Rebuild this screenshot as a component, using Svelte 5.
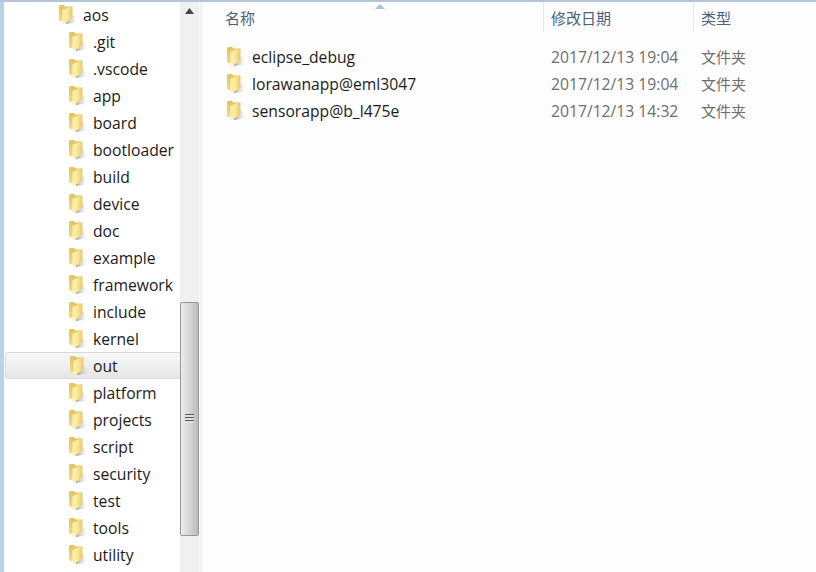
<script>
  const tree = ['.git','.vscode','app','board','bootloader','build','device','doc','example','framework','include','kernel','out','platform','projects','script','security','test','tools','utility'];
  const files = [
    ['eclipse_debug','2017/12/13 19:04'],
    ['lorawanapp@eml3047','2017/12/13 19:04'],
    ['sensorapp@b_l475e','2017/12/13 14:32']
  ];
</script>

{#snippet folder()}
  <svg class="folder" width="19" height="21" viewBox="0 0 19 21">
    <defs>
      <linearGradient id="fb" x1="0" y1="0" x2="0" y2="1"><stop offset="0" stop-color="#e3c25f"/><stop offset="1" stop-color="#f0da82"/></linearGradient>
      <linearGradient id="ff" x1="0" y1="0" x2="1" y2="0"><stop offset="0" stop-color="#fcf2ba"/><stop offset="0.5" stop-color="#fae795"/><stop offset="1" stop-color="#e9c968"/></linearGradient>
      <linearGradient id="fs" x1="0" y1="0" x2="1" y2="0"><stop offset="0" stop-color="#777" stop-opacity=".7"/><stop offset="1" stop-color="#bbb" stop-opacity="0"/></linearGradient>
    </defs>
    <path d="M13 9 L19 14 L19 18.5 L8 20 L8 17 Z" fill="url(#fs)"/>
    <path d="M1 2.5 Q1 1 2.5 1 L6 1 L7.5 2.5 L12 2.5 L12 16 L2.5 17 Q1 17 1 15.5 Z" fill="url(#fb)"/>
    <path d="M4.5 6 L13.5 2 Q14.5 2 14.5 3 L14.5 14.5 L6.5 19.7 Q5 20.3 4.5 18.5 Z" fill="url(#ff)"/>
  </svg>
{/snippet}

<div class="window">
  <aside class="tree">
    <div class="row root">{@render folder()}<span>aos</span></div>
    {#each tree as name}
      <div class="row" class:hot={name === 'out'}>{@render folder()}<span>{name}</span></div>
    {/each}
  </aside>

  <div class="scrollbar">
    <svg class="arrow" width="9" height="6" viewBox="0 0 9 6"><path d="M4.5 0 L9 6 L0 6 Z" fill="#444"/></svg>
    <div class="thumb"><div class="grip"></div></div>
  </div>

  <div class="split"></div>

  <main class="list">
    <div class="sort"><svg width="10" height="5" viewBox="0 0 10 5"><path d="M5 0 L10 5 L0 5 Z" fill="#a9c2de"/></svg></div>
    <header class="head">
      <div class="h c1">名称</div>
      <div class="h c2">修改日期</div>
      <div class="h c3">类型</div>
    </header>
    <div class="rows">
      {#each files as [name, date]}
        <div class="file">
          <div class="c1 fname">{@render folder()}<span>{name}</span></div>
          <div class="c2 meta">{date}</div>
          <div class="c3 meta cjk">文件夹</div>
        </div>
      {/each}
    </div>
  </main>
</div>

<style>
  :global(body) { margin: 0; background: #fff; }
  .window {
    width: 816px; height: 572px; box-sizing: border-box; overflow: hidden;
    display: flex; background: #fff;
    border-top: 2px solid #b4c4da;
    font-family: "Open Sans", "Noto Sans CJK SC", sans-serif;
    font-size: 15.7px; color: #1a1a1a;
  }
  .tree { width: 176px; margin-left: 4px; margin-top: -1px; flex: none; }
  .window::before { content: ""; width: 4px; flex: none; background: #b9d1ea; margin-right: -4px; margin-top: -2px; }
  .row {
    height: 27px; display: flex; align-items: center; padding-left: 64px; box-sizing: border-box;
    white-space: nowrap;
  }
  .row .folder { margin-right: 6px; flex: none; }
  .root { padding-left: 54px; }
  .root .folder { margin-right: 6px; }
  .hot {
    margin-left: 1px; padding-left: 63px; width: 175px;
    background: linear-gradient(#f8f8f8, #e6e6e6);
    border: 1px solid #d9d9d9; border-right: 0; border-radius: 3px 0 0 3px;
  }
  .row.hot .folder { margin-right: 5px; }
  .scrollbar {
    width: 19px; flex: none; background: #f0f0f0; position: relative;
    display: flex; flex-direction: column; align-items: center; margin-top: -2px;
  }
  .arrow { margin-top: 8px; }
  .thumb {
    position: absolute; top: 302px; left: 0; width: 19px; height: 234px; box-sizing: border-box;
    border: 1px solid #979797; border-radius: 2px;
    background: linear-gradient(90deg, #ececec, #d8d8d8 45%, #c8c8c8 75%, #bcbcbc);
  }
  .grip {
    position: absolute; left: 4px; top: 111px; width: 9px; height: 9px;
    background: repeating-linear-gradient(#555 0 1px, #e0e0e0 1px 3px);
  }
  .split { width: 3px; flex: none; background: linear-gradient(90deg, #fff, #e4ecf6); margin-top: -2px; }
  .list { flex: 1; position: relative; min-width: 0; background: #fdfdfd; }
  .sort { position: absolute; left: 173px; top: 1px; line-height: 0; }
  .head { height: 34px; display: flex; }
  .h { font-size: 15px; color: #4c607a; padding-left: 7px; display: flex; align-items: center; box-sizing: border-box; height: 30px; border-right: 1px solid #e3e8f0; }
  .c1 { width: 342px; flex: none; box-sizing: border-box; }
  .c2 { width: 150px; flex: none; box-sizing: border-box; }
  .c3 { flex: 1; box-sizing: border-box; border-right: 0; }
  .h.c1 { padding-left: 23px; }
  .rows { padding-top: 7px; }
  .file { height: 27px; display: flex; align-items: center; }
  .fname { display: flex; align-items: center; padding-left: 24px; }
  .fname .folder { margin-right: 7px; }
  .meta { color: #6d6d6d; padding-left: 7px; font-size: 15.7px; }
  .cjk { font-size: 15px; padding-left: 7px; }
</style>
